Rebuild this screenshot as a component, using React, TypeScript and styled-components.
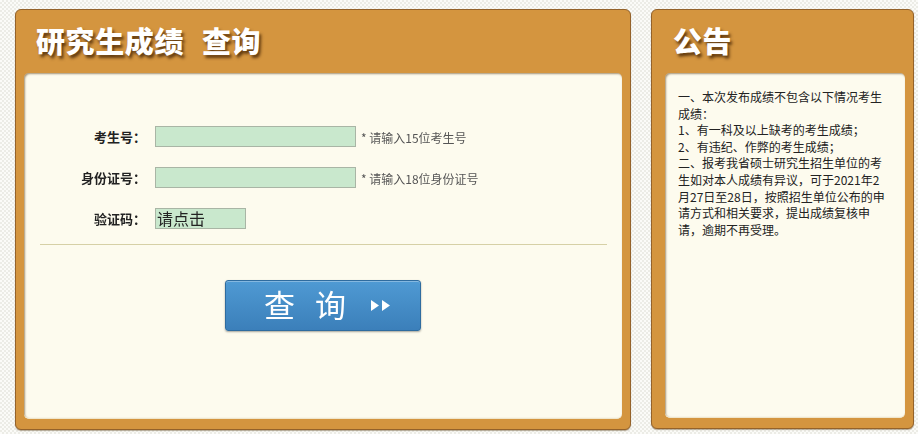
import React from "react";
import styled, { createGlobalStyle } from "styled-components";

const GlobalStyle = createGlobalStyle`
  html, body {
    margin: 0;
    padding: 0;
  }
  body {
    font-family: "Noto Sans CJK SC", "Noto Sans", sans-serif;
    background-color: #f6f6f2;
    background-image: repeating-conic-gradient(#ecece6 0% 25%, #fbfbf8 0% 50%);
    background-size: 4px 4px;
  }
`;

const Page = styled.div`
  display: flex;
  gap: 20px;
  padding: 9px 0 0 15px;
  width: 918px;
  height: 434px;
  box-sizing: border-box;
`;

const Panel = styled.div<{ $w: number; $h: number; $innerLeft: number }>`
  width: ${({ $w }) => $w}px;
  height: ${({ $h }) => $h}px;
  box-sizing: border-box;
  background: #d4953f;
  border: 1px solid #94622a;
  border-radius: 6px;
  box-shadow: 0 1px 1px rgba(80, 50, 10, 0.4);
  display: flex;
  flex-direction: column;
  padding: 0 8px 10px ${({ $innerLeft }) => $innerLeft}px;
`;

const Title = styled.h1<{ $left: number }>`
  margin: 0;
  height: 63px;
  box-sizing: border-box;
  padding: 12px 0 0 ${({ $left }) => $left}px;
  font-family: "Noto Sans CJK SC", sans-serif;
  font-weight: 900;
  font-size: 29px;
  line-height: 36px;
  color: #ffffff;
  letter-spacing: 0.6px;
  white-space: nowrap;
  text-shadow: 2px 3px 3px rgba(60, 30, 0, 0.75);
`;

const TitleGap = styled.span`
  display: inline-block;
  width: 18px;
`;

const Inner = styled.div`
  flex: 1;
  background: #fdfbee;
  border-radius: 5px;
  box-shadow: inset 1px 1px 2px rgba(90, 60, 20, 0.55);
  border-bottom: 1px solid #f0e6cc;
`;

const Form = styled.div`
  display: grid;
  grid-template-columns: 122px auto;
  column-gap: 9px;
  row-gap: 20px;
  align-items: center;
  padding-top: 53px;
`;

const Label = styled.div`
  font-size: 13px;
  font-weight: 700;
  color: #222;
  text-align: right;
  line-height: 21px;
`;

const Field = styled.div`
  display: flex;
  align-items: center;
  gap: 5px;
`;

const TextInput = styled.input`
  width: 201px;
  height: 21px;
  box-sizing: border-box;
  border: 1px solid #a9b5a5;
  background: #c9e8cd;
  padding: 0 2px;
  margin: 0;
  outline: none;
  caret-color: #000;
`;

const Hint = styled.span`
  font-size: 12px;
  color: #555;
  line-height: 16px;
  padding-top: 2px;
`;

const Captcha = styled.div`
  width: 91px;
  height: 21px;
  box-sizing: border-box;
  border: 1px solid #a9b5a5;
  background: #c9e8cd;
  font-size: 16px;
  line-height: 18px;
  color: #222;
  padding-left: 1px;
  white-space: nowrap;
`;

const Rule = styled.hr`
  margin: 15px 15px 0 16px;
  border: none;
  border-top: 1px solid #d6d0a6;
  height: 0;
`;

const ButtonRow = styled.div`
  display: flex;
  justify-content: center;
  padding-top: 35px;
`;

const SearchButton = styled.button`
  width: 196px;
  height: 51px;
  box-sizing: border-box;
  border: 1px solid #2f6c9f;
  border-radius: 3px;
  background: linear-gradient(#4f9ad3, #3b7fba);
  box-shadow: 0 1px 2px rgba(0, 0, 0, 0.35), inset 0 1px 0 rgba(255, 255, 255, 0.3);
  color: #fff;
  font-family: "Noto Sans CJK SC", sans-serif;
  font-size: 31px;
  font-weight: 400;
  display: flex;
  align-items: center;
  padding: 0 0 0 38px;
  cursor: pointer;
`;

const BtnChar = styled.span<{ $gap: number }>`
  margin-right: ${({ $gap }) => $gap}px;
  line-height: 40px;
  margin-top: -3px;
`;

const Notice = styled.div`
  width: 212px;
  padding: 16px 0 0 13px;
  font-size: 12px;
  line-height: 16.6px;
  color: #222;
`;

const Arrows = () => (
  <svg width="22" height="13" viewBox="0 0 22 13">
    <path d="M1 1 L9 6.5 L1 12 Z" fill="#fff" />
    <path d="M12 1 L20 6.5 L12 12 Z" fill="#fff" />
  </svg>
);

const notice = [
  "一、本次发布成绩不包含以下情况考生成绩：",
  "1、有一科及以上缺考的考生成绩；",
  "2、有违纪、作弊的考生成绩；",
  "二、报考我省硕士研究生招生单位的考生如对本人成绩有异议，可于2021年2月27日至28日，按照招生单位公布的申请方式和相关要求，提出成绩复核申请，逾期不再受理。",
];

export default function App() {
  return (
    <>
      <GlobalStyle />
      <Page>
        <Panel $w={616} $h={421} $innerLeft={8}>
          <Title $left={12}>
            研究生成绩
            <TitleGap />
            查询
          </Title>
          <Inner>
            <Form>
              <Label>考生号：</Label>
              <Field>
                <TextInput autoFocus />
                <Hint>* 请输入15位考生号</Hint>
              </Field>
              <Label>身份证号：</Label>
              <Field>
                <TextInput />
                <Hint>* 请输入18位身份证号</Hint>
              </Field>
              <Label>验证码：</Label>
              <Field>
                <Captcha>请点击</Captcha>
              </Field>
            </Form>
            <Rule />
            <ButtonRow>
              <SearchButton>
                <BtnChar $gap={20}>查</BtnChar>
                <BtnChar $gap={24}>询</BtnChar>
                <Arrows />
              </SearchButton>
            </ButtonRow>
          </Inner>
        </Panel>
        <Panel $w={263} $h={420} $innerLeft={13}>
          <Title $left={8}>公告</Title>
          <Inner>
            <Notice>
              {notice.map((t) => (
                <div key={t}>{t}</div>
              ))}
            </Notice>
          </Inner>
        </Panel>
      </Page>
    </>
  );
}
